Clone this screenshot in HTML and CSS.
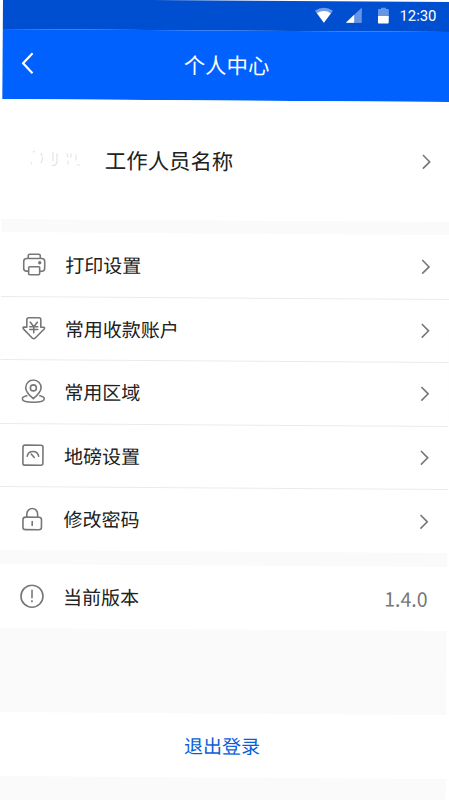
FILE: index.html
```html
<!DOCTYPE html>
<html lang="zh-CN">
<head>
<meta charset="utf-8">
<title>个人中心</title>
<link rel="stylesheet" href="styles.css">
</head>
<body>
<svg class="defs" aria-hidden="true">
  <symbol id="chevron" viewBox="0 0 9 16"><path d="M1 1.200 7.800 8 1 14.800"/></symbol>
</svg>
<div class="screen">
  <div class="status">
    <svg class="wifi" viewBox="0 0 18 16"><path opacity=".45" d="M0 3.600Q9-2.600 18 3.600L9 15.500Z"/><path d="M2 6Q9 1.800 16 6L9 15.500Z"/></svg>
    <svg class="signal" viewBox="0 0 16 16"><path opacity=".4" d="M16 0V15.500H0Z"/><path d="M8.300 7.500V15.500H0Z"/></svg>
    <svg class="battery" viewBox="0 0 11 17"><path opacity=".4" d="M3 0h5v1.500h2q1 0 1 1V8.500H0V2.500q0-1 1-1h2Z"/><path d="M0 8.500h11V15q0 1-1 1H1q-1 0-1-1Z"/></svg>
    <span class="time">12:30</span>
  </div>
  <header class="header">
    <svg class="back" viewBox="0 0 12 22"><path d="M11 1 1.500 11 11 21"/></svg>
    <h1>个人中心</h1>
  </header>
  <section class="profile">
    <svg class="avatar" viewBox="0 0 52 20"><path d="M4 2l2 1M2 13l1 2M12 4l1 3M14 8l-2 6M24 3v9M23 16q4 1 5-3V4M38 4l1 4M42 4v4M39 11v4M47 5v6M48 15l3 1"/></svg>
    <span class="name">工作人员名称</span>
    <svg class="chevron"><use href="#chevron"/></svg>
  </section>
  <ul class="menu">
    <li><svg class="icon" viewBox="0 0 24 24"><path d="M6 6.300V3.500Q6 2 7.500 2h9Q18 2 18 3.500V6.300M6 19H4.500Q1.500 19 1.500 16V9.300Q1.500 6.300 4.500 6.300h15q3 0 3 3V16q0 3-3 3H18M7.500 14.500h9q1 0 1 1v6q0 1-1 1h-9q-1 0-1-1v-6q0-1 1-1Z"/><circle class="dot" cx="17.500" cy="10.500" r="1.700"/></svg><span class="label">打印设置</span><svg class="chevron"><use href="#chevron"/></svg></li>
    <li><svg class="icon" viewBox="0 0 24 24"><path d="M7 1.500h10q2 0 2 2V11h3q1.500.400.400 1.700L13.300 22q-1.300 1-2.600 0L1.600 12.700Q.500 11.400 2 11h3V3.500q0-2 2-2ZM8.500 6l3.500 4.500L15.500 6M8 10.500h8M8 13.300h8M12 10.500v6"/></svg><span class="label">常用收款账户</span><svg class="chevron"><use href="#chevron"/></svg></li>
    <li><svg class="icon" viewBox="0 0 24 24"><path d="M12 19.500Q4.300 13 4.300 8.500a7.700 7.700 0 0 1 15.400 0Q19.700 13 12 19.500ZM5.500 16.500Q1 17.500 1 19.500C1 21.800 6 23 12 23s11-1.200 11-3.500Q23 17.500 18.500 16.500"/><circle cx="12" cy="8.700" r="3"/></svg><span class="label">常用区域</span><svg class="chevron"><use href="#chevron"/></svg></li>
    <li><svg class="icon" viewBox="0 0 24 24"><rect x="2" y="2" width="20" height="20" rx="2"/><path d="M6.300 13a5.800 5.800 0 0 1 11.400 0M10.300 10.800l3 3.500"/></svg><span class="label">地磅设置</span><svg class="chevron"><use href="#chevron"/></svg></li>
    <li><svg class="icon" viewBox="0 0 24 24"><rect x="2.500" y="10" width="18.500" height="12.500" rx="2.500"/><path d="M6.300 10V6.700a5.300 5.300 0 0 1 10.800 0V10M11.700 14.300v4"/></svg><span class="label">修改密码</span><svg class="chevron"><use href="#chevron"/></svg></li>
  </ul>
  <div class="version">
    <svg class="icon" viewBox="0 0 24 24"><circle cx="12" cy="12" r="11"/><path d="M12 6v7.500M12 16.500v1"/></svg><span class="label">当前版本</span><span class="value">1.4.0</span>
  </div>
  <div class="logout">退出登录</div>
</div>
</body>
</html>
```
FILE: styles.css
```css
* { box-sizing: border-box; }
html { height: 100%; overflow: hidden; background: #fff; }
body {
  margin: 0;
  height: 100%;
  overflow: hidden;
  background: #fff;
  color: #202020;
  font-family: "Noto Sans CJK SC", sans-serif;
}
.defs { display: none; }
.screen {
  width: 448px;
  height: 801px;
  margin: -1.300px 0 0 3px;
  background: #fafafa;
  transform: rotate(.385deg);
  transform-origin: 0 0;
  display: flow-root;
}
svg { flex: none; fill: none; display: block; }
.status {
  height: 29.500px;
  background: #004fd0;
  display: flex;
  align-items: center;
  justify-content: flex-end;
  padding: 0 14.500px 1px 0;
}
.status svg { fill: #fff; }
.wifi { width: 18px; height: 16px; margin-right: 13px; }
.signal { width: 16px; height: 16px; margin-right: 16px; }
.battery { width: 11px; height: 17px; margin-right: 11px; }
.time { color: #fff; font: 14.800px/20px Roboto, sans-serif; }
.header {
  height: 70px;
  background: #0061ff;
  color: #fff;
  display: grid;
  grid-template-columns: 60px 1fr 60px;
  align-items: center;
}
.back { width: 12px; height: 22px; margin: -1px 0 0 19px; stroke: #fff; stroke-width: 2.200; }
h1 { margin: -1px 0 0; font-size: 21.400px; font-weight: 400; line-height: 32px; text-align: center; }
.profile {
  height: 120px;
  background: #fff;
  display: flex;
  align-items: center;
  padding: 0 19px 0 27px;
}
.avatar { width: 52px; height: 20px; stroke: #e4e4e4; stroke-width: 1.200; }
.name { flex: 1; margin-left: 24px; padding-bottom: 1px; font-size: 21.400px; }
.chevron { width: 9px; height: 16px; stroke: #777; stroke-width: 1.600; margin-left: auto; }
.menu {
  list-style: none;
  margin: 13.500px 0 0;
  padding: 0;
}
.menu li, .version {
  height: 63.600px;
  background: #fff;
  display: flex;
  align-items: center;
  gap: 19px;
  padding: 0 19.500px 0 21px;
  font-size: 19px;
}
.menu li + li { border-top: 1px solid #ebebeb; }
.label { padding-bottom: 1.500px; }
.icon { width: 24px; height: 24px; stroke: #777; stroke-width: 1.600; stroke-linecap: round; stroke-linejoin: round; }
.dot { fill: #777; stroke: none; }
.version { margin-top: 14px; }
.value { margin-left: auto; font-size: 19.400px; color: #777; }
.logout {
  margin-top: 84px;
  height: 64px;
  background: #fff;
  color: #0b5fd6;
  font-size: 19px;
  line-height: 63px;
  text-align: center;
}
```
